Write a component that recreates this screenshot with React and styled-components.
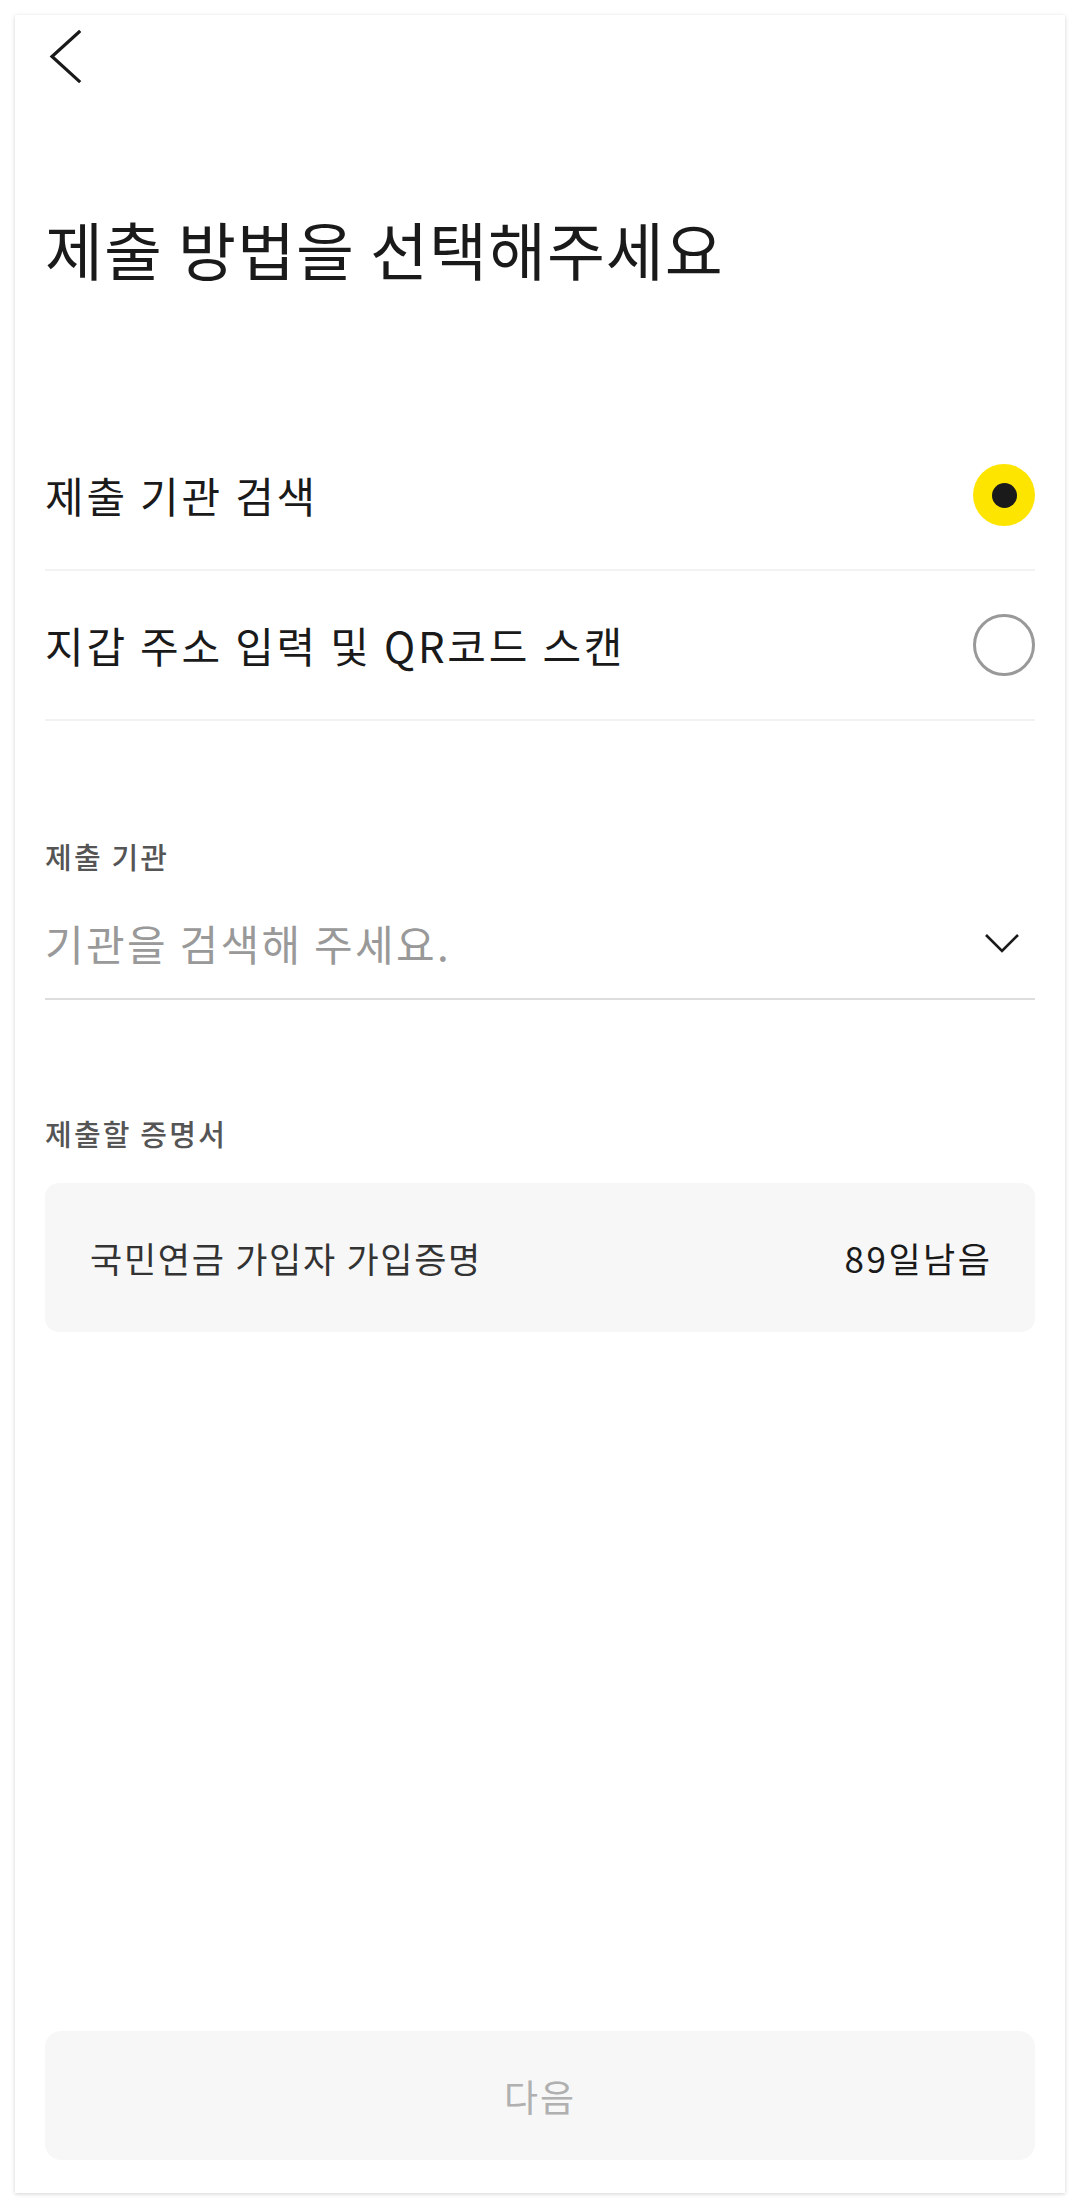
import React, { useState } from "react";
import styled, { createGlobalStyle } from "styled-components";

const GlobalStyle = createGlobalStyle`
  html, body {
    margin: 0;
    padding: 0;
    background: #ffffff;
  }
  body {
    font-family: "Noto Sans CJK KR", "Noto Sans", Roboto, sans-serif;
    color: #1a1a1a;
  }
  * {
    box-sizing: border-box;
  }
`;

const options = [
  { id: "search", label: "제출 기관 검색" },
  { id: "wallet", label: "지갑 주소 입력 및 QR코드 스캔" },
];

const App = () => {
  const [selected, setSelected] = useState("search");

  return (
    <>
      <GlobalStyle />
      <Page>
        <Card>
          <Header>
            <BackButton aria-label="뒤로">
              <svg width="40" height="56" viewBox="0 0 40 56" fill="none">
                <path
                  d="M34 4 L7 28.5 L34 53"
                  stroke="#1a1a1a"
                  strokeWidth="3.2"
                  strokeLinecap="square"
                />
              </svg>
            </BackButton>
          </Header>

          <Title>제출 방법을 선택해주세요</Title>

          <OptionList>
            {options.map((opt) => (
              <OptionRow key={opt.id} onClick={() => setSelected(opt.id)}>
                <OptionText>{opt.label}</OptionText>
                <Radio $checked={selected === opt.id} />
              </OptionRow>
            ))}
          </OptionList>

          <FieldLabel>제출 기관</FieldLabel>
          <SelectRow>
            <Placeholder>기관을 검색해 주세요.</Placeholder>
            <svg width="36" height="22" viewBox="0 0 36 22" fill="none">
              <path
                d="M2 3 L18 19 L34 3"
                stroke="#1a1a1a"
                strokeWidth="2.6"
              />
            </svg>
          </SelectRow>

          <CertLabel>제출할 증명서</CertLabel>
          <CertBox>
            <CertName>국민연금 가입자 가입증명</CertName>
            <CertDays>89일남음</CertDays>
          </CertBox>

          <Spacer />

          <NextButton disabled>다음</NextButton>
        </Card>
      </Page>
    </>
  );
};

export default App;

const Page = styled.div`
  padding: 15px 15px 16px;
  background: #ffffff;
`;

const Card = styled.div`
  display: flex;
  flex-direction: column;
  height: 2178px;
  padding: 0 30px 33px;
  background: #ffffff;
  box-shadow: 0 1px 4px rgba(0, 0, 0, 0.18);
`;

const Header = styled.div`
  display: flex;
  align-items: center;
  height: 82px;
`;

const BackButton = styled.button`
  display: flex;
  align-items: center;
  padding: 0;
  border: none;
  background: none;
  cursor: pointer;
`;

const Title = styled.h1`
  margin: 106px 0 0;
  font-size: 63px;
  line-height: 90px;
  font-weight: 400;
  color: #1a1a1a;
  letter-spacing: 1px;
`;

const OptionList = styled.div`
  display: flex;
  flex-direction: column;
  margin-top: 128px;
`;

const OptionRow = styled.div`
  display: flex;
  align-items: center;
  justify-content: space-between;
  height: 150px;
  border-bottom: 2px solid #f2f2f2;
  cursor: pointer;
`;

const OptionText = styled.span`
  font-size: 42px;
  line-height: 60px;
  letter-spacing: 2.8px;
  color: #1a1a1a;
`;

const Radio = styled.span`
  position: relative;
  display: block;
  width: 62px;
  height: 62px;
  border-radius: 50%;
  background: ${(p) => (p.$checked ? "#fee500" : "#ffffff")};
  border: ${(p) => (p.$checked ? "none" : "3.5px solid #999999")};

  &::after {
    content: "";
    display: ${(p) => (p.$checked ? "block" : "none")};
    position: absolute;
    top: 50%;
    left: 50%;
    width: 25px;
    height: 25px;
    margin: -12.5px 0 0 -12.5px;
    border-radius: 50%;
    background: #1a1a1a;
  }
`;

const FieldLabel = styled.div`
  margin-top: 115px;
  font-size: 29px;
  line-height: 40px;
  font-weight: 500;
  letter-spacing: 2.2px;
  color: #555555;
`;

const SelectRow = styled.div`
  display: flex;
  align-items: center;
  justify-content: space-between;
  margin-top: 38px;
  height: 86px;
  padding: 0 15px 26px 0;
  border-bottom: 2px solid #dddddd;
`;

const Placeholder = styled.span`
  font-size: 42px;
  line-height: 60px;
  letter-spacing: 2.3px;
  color: #999999;
`;

const CertLabel = styled(FieldLabel)`
  margin-top: 113px;
`;

const CertBox = styled.div`
  display: flex;
  align-items: center;
  justify-content: space-between;
  margin-top: 30px;
  height: 149px;
  padding: 0 45px;
  border-radius: 14px;
  background: #f7f7f7;
`;

const CertName = styled.span`
  font-size: 35px;
  letter-spacing: 1.7px;
  color: #333333;
`;

const CertDays = styled.span`
  font-size: 35px;
  letter-spacing: 2.5px;
  margin-right: -2.5px;
  color: #1a1a1a;
`;

const Spacer = styled.div`
  flex: 1;
`;

const NextButton = styled.button`
  height: 129px;
  border: none;
  border-radius: 16px;
  background: #f7f7f7;
  font-family: inherit;
  font-size: 37px;
  letter-spacing: 2px;
  color: #b0b0b0;
`;
